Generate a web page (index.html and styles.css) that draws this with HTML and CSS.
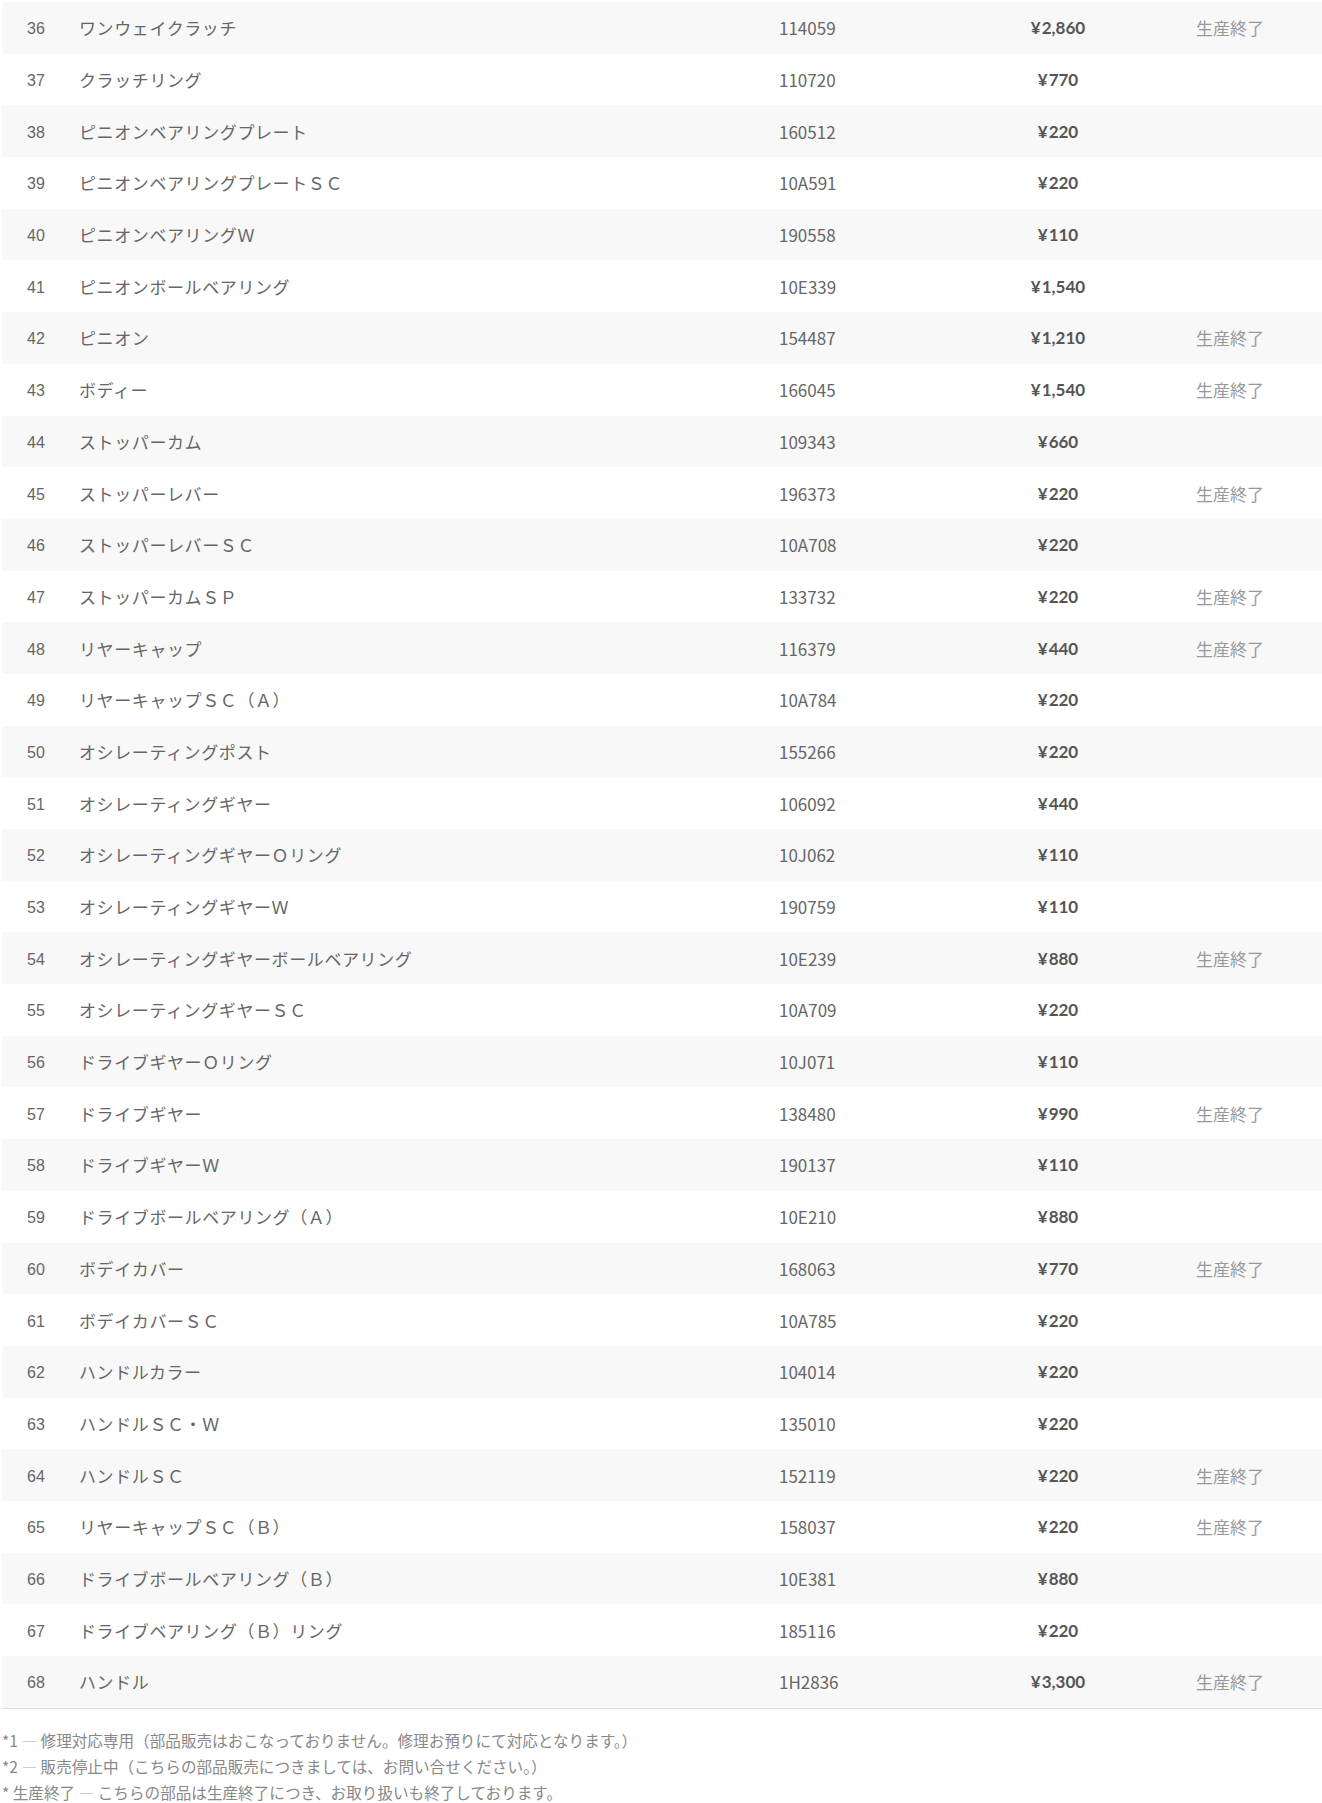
FILE: index.html
```html
<!DOCTYPE html>
<html lang="ja">
<head>
    <meta charset="UTF-8">
    <meta name="viewport" content="width=device-width, initial-scale=1.0">
    <title>部品リスト</title>
    <link rel="stylesheet" href="styles.css">
</head>
<body>
    <div class="parts">
        <div class="row"><span class="no">36</span><span class="name">ワンウェイクラッチ</span><span class="code">114059</span><span class="price">¥2,860</span><span class="status">生産終了</span></div>
        <div class="row"><span class="no">37</span><span class="name">クラッチリング</span><span class="code">110720</span><span class="price">¥770</span><span class="status"></span></div>
        <div class="row"><span class="no">38</span><span class="name">ピニオンベアリングプレート</span><span class="code">160512</span><span class="price">¥220</span><span class="status"></span></div>
        <div class="row"><span class="no">39</span><span class="name">ピニオンベアリングプレートＳＣ</span><span class="code">10A591</span><span class="price">¥220</span><span class="status"></span></div>
        <div class="row"><span class="no">40</span><span class="name">ピニオンベアリングＷ</span><span class="code">190558</span><span class="price">¥110</span><span class="status"></span></div>
        <div class="row"><span class="no">41</span><span class="name">ピニオンボールベアリング</span><span class="code">10E339</span><span class="price">¥1,540</span><span class="status"></span></div>
        <div class="row"><span class="no">42</span><span class="name">ピニオン</span><span class="code">154487</span><span class="price">¥1,210</span><span class="status">生産終了</span></div>
        <div class="row"><span class="no">43</span><span class="name">ボディー</span><span class="code">166045</span><span class="price">¥1,540</span><span class="status">生産終了</span></div>
        <div class="row"><span class="no">44</span><span class="name">ストッパーカム</span><span class="code">109343</span><span class="price">¥660</span><span class="status"></span></div>
        <div class="row"><span class="no">45</span><span class="name">ストッパーレバー</span><span class="code">196373</span><span class="price">¥220</span><span class="status">生産終了</span></div>
        <div class="row"><span class="no">46</span><span class="name">ストッパーレバーＳＣ</span><span class="code">10A708</span><span class="price">¥220</span><span class="status"></span></div>
        <div class="row"><span class="no">47</span><span class="name">ストッパーカムＳＰ</span><span class="code">133732</span><span class="price">¥220</span><span class="status">生産終了</span></div>
        <div class="row"><span class="no">48</span><span class="name">リヤーキャップ</span><span class="code">116379</span><span class="price">¥440</span><span class="status">生産終了</span></div>
        <div class="row"><span class="no">49</span><span class="name">リヤーキャップＳＣ（Ａ）</span><span class="code">10A784</span><span class="price">¥220</span><span class="status"></span></div>
        <div class="row"><span class="no">50</span><span class="name">オシレーティングポスト</span><span class="code">155266</span><span class="price">¥220</span><span class="status"></span></div>
        <div class="row"><span class="no">51</span><span class="name">オシレーティングギヤー</span><span class="code">106092</span><span class="price">¥440</span><span class="status"></span></div>
        <div class="row"><span class="no">52</span><span class="name">オシレーティングギヤーＯリング</span><span class="code">10J062</span><span class="price">¥110</span><span class="status"></span></div>
        <div class="row"><span class="no">53</span><span class="name">オシレーティングギヤーＷ</span><span class="code">190759</span><span class="price">¥110</span><span class="status"></span></div>
        <div class="row"><span class="no">54</span><span class="name">オシレーティングギヤーボールベアリング</span><span class="code">10E239</span><span class="price">¥880</span><span class="status">生産終了</span></div>
        <div class="row"><span class="no">55</span><span class="name">オシレーティングギヤーＳＣ</span><span class="code">10A709</span><span class="price">¥220</span><span class="status"></span></div>
        <div class="row"><span class="no">56</span><span class="name">ドライブギヤーＯリング</span><span class="code">10J071</span><span class="price">¥110</span><span class="status"></span></div>
        <div class="row"><span class="no">57</span><span class="name">ドライブギヤー</span><span class="code">138480</span><span class="price">¥990</span><span class="status">生産終了</span></div>
        <div class="row"><span class="no">58</span><span class="name">ドライブギヤーＷ</span><span class="code">190137</span><span class="price">¥110</span><span class="status"></span></div>
        <div class="row"><span class="no">59</span><span class="name">ドライブボールベアリング（Ａ）</span><span class="code">10E210</span><span class="price">¥880</span><span class="status"></span></div>
        <div class="row"><span class="no">60</span><span class="name">ボデイカバー</span><span class="code">168063</span><span class="price">¥770</span><span class="status">生産終了</span></div>
        <div class="row"><span class="no">61</span><span class="name">ボデイカバーＳＣ</span><span class="code">10A785</span><span class="price">¥220</span><span class="status"></span></div>
        <div class="row"><span class="no">62</span><span class="name">ハンドルカラー</span><span class="code">104014</span><span class="price">¥220</span><span class="status"></span></div>
        <div class="row"><span class="no">63</span><span class="name">ハンドルＳＣ・Ｗ</span><span class="code">135010</span><span class="price">¥220</span><span class="status"></span></div>
        <div class="row"><span class="no">64</span><span class="name">ハンドルＳＣ</span><span class="code">152119</span><span class="price">¥220</span><span class="status">生産終了</span></div>
        <div class="row"><span class="no">65</span><span class="name">リヤーキャップＳＣ（Ｂ）</span><span class="code">158037</span><span class="price">¥220</span><span class="status">生産終了</span></div>
        <div class="row"><span class="no">66</span><span class="name">ドライブボールベアリング（Ｂ）</span><span class="code">10E381</span><span class="price">¥880</span><span class="status"></span></div>
        <div class="row"><span class="no">67</span><span class="name">ドライブベアリング（Ｂ）リング</span><span class="code">185116</span><span class="price">¥220</span><span class="status"></span></div>
        <div class="row"><span class="no">68</span><span class="name">ハンドル</span><span class="code">1H2836</span><span class="price">¥3,300</span><span class="status">生産終了</span></div>
    </div>

    <div class="notes">
        <p>*1 <span class="dash">—</span> 修理対応専用（部品販売はおこなっておりません。修理お預りにて対応となります。）</p>
        <p>*2 <span class="dash">—</span> 販売停止中（こちらの部品販売につきましては、お問い合せください。）</p>
        <p>* 生産終了 <span class="dash">—</span> こちらの部品は生産終了につき、お取り扱いも終了しております。</p>
    </div>
</body>
</html>
```

FILE: styles.css
```css
body {
    margin: 0;
    padding: 2px 0 0 2px;
    background: #ffffff;
    color: #666;
    font-family: 'Noto Sans CJK JP', sans-serif;
}

.parts {
    width: 1320px;
    border-bottom: 1px solid #e2e2e2;
}

.row {
    display: grid;
    grid-template-columns: 68px 700px 208px 160px 1fr;
    align-items: center;
    height: 51.7px;
    font-size: 17px;
}

.row:nth-child(odd) {
    background-color: #f8f8f8;
}

.no {
    padding-top: 3px;
    text-align: center;
    font-family: 'Liberation Sans', sans-serif;
    font-size: 16px;
    color: #666;
}

.name {
    padding-left: 9px;
    font-family: 'Liberation Sans', 'Noto Sans CJK JP', sans-serif;
    letter-spacing: 0.6px;
    color: #666;
}

.code {
    padding-left: 9px;
    color: #666;
}

.price {
    text-align: center;
    font-family: 'Lato', sans-serif;
    font-weight: bold;
    font-size: 17px;
    color: #555;
}

.price::first-letter {
    margin-right: 1px;
}

.status {
    text-align: center;
    color: #999;
}

.notes {
    margin-top: 18px;
    font-size: 15.6px;
    color: #888;
}

.notes p {
    margin: 0;
    line-height: 26px;
}

.dash {
    color: #c4c4c4;
}
```
